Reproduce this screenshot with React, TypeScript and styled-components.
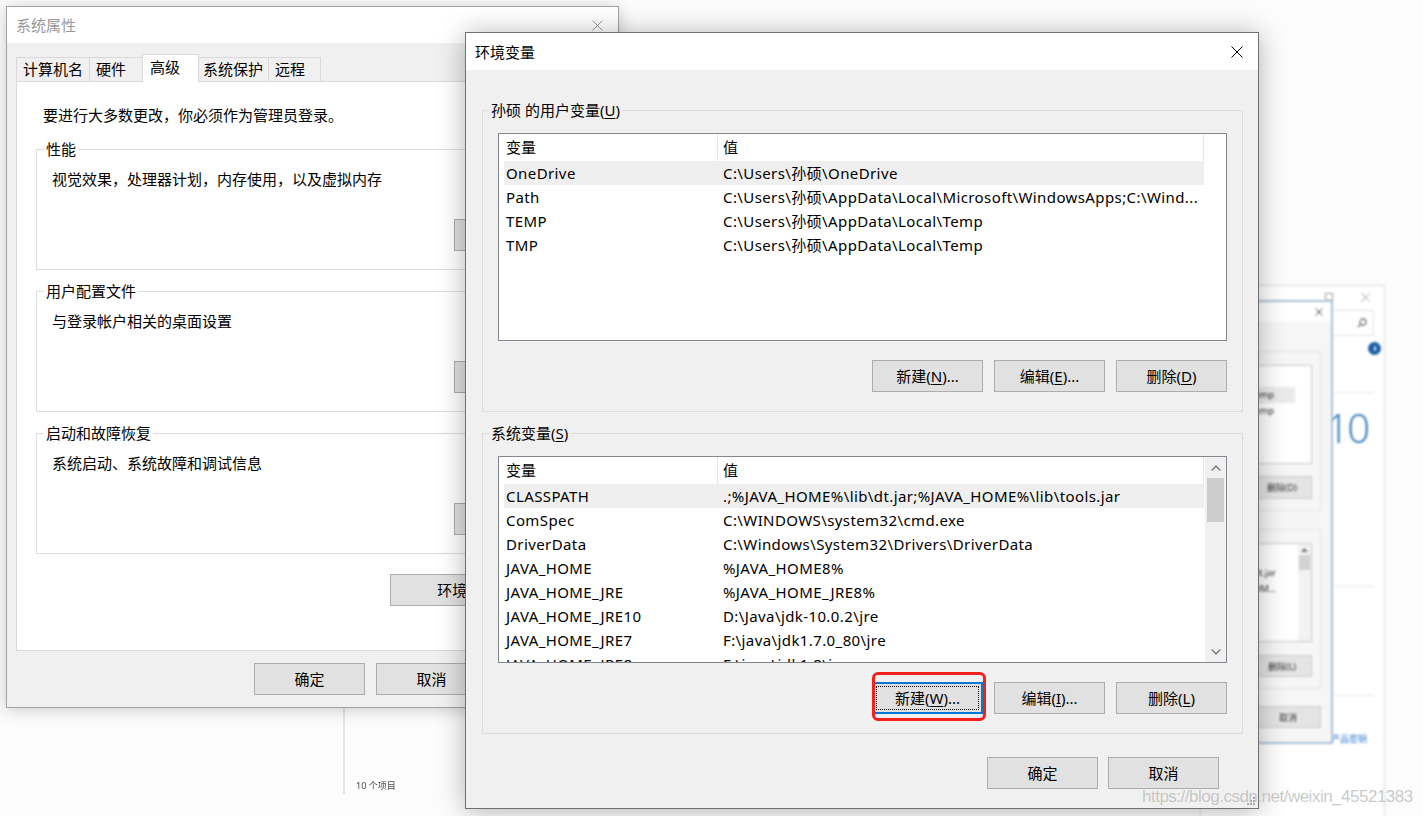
import React from "react";
import styled, { createGlobalStyle } from "styled-components";

const GlobalStyle = createGlobalStyle`
  html, body { margin: 0; padding: 0; }
  body {
    background: #fcfcfc;
    font-family: "Noto Sans", "Noto Sans CJK SC", sans-serif;
    font-size: 15px;
    color: #000;
    overflow: hidden;
  }
  *, *::before, *::after { box-sizing: border-box; }
`;

const Desktop = styled.div`
  position: relative;
  width: 1423px;
  height: 816px;
  overflow: hidden;
  background: #fcfcfc;
`;

type Frame = { $x: number; $y: number; $w: number; $h: number };

/* ---------- generic window chrome ---------- */

const Window = styled.section<Frame & { $active?: boolean }>`
  position: absolute;
  left: ${(p) => p.$x}px;
  top: ${(p) => p.$y}px;
  width: ${(p) => p.$w}px;
  height: ${(p) => p.$h}px;
  display: flex;
  flex-direction: column;
  background: #f0f0f0;
  border: 1px solid ${(p) => (p.$active ? "#707070" : "#a3a3a3")};
  box-shadow: ${(p) =>
    p.$active ? "0 2px 26px rgba(0,0,0,0.30)" : "0 2px 16px rgba(0,0,0,0.20)"};
`;

const TitleBar = styled.header<{ $h: number }>`
  flex: none;
  height: ${(p) => p.$h}px;
  background: #fff;
  display: flex;
  align-items: center;
  padding-left: 9px;
`;

const TitleText = styled.span<{ $inactive?: boolean }>`
  flex: 1;
  line-height: 20px;
  color: ${(p) => (p.$inactive ? "#999" : "#000")};
`;

const CloseBox = styled.span`
  width: 42px;
  height: 100%;
  display: flex;
  align-items: center;
  justify-content: center;
`;

const CloseIcon = ({ color, size }: { color: string; size: number }) => (
  <svg width={size} height={size} viewBox={`0 0 ${size} ${size}`}>
    <path
      d={`M0.5 0.5 L${size - 0.5} ${size - 0.5} M${size - 0.5} 0.5 L0.5 ${size - 0.5}`}
      stroke={color}
      strokeWidth="1"
      fill="none"
    />
  </svg>
);

const Key = styled.u`
  text-decoration-thickness: 1px;
  text-underline-offset: 2px;
`;

const Button = styled.button<{ $w?: number }>`
  flex: none;
  width: ${(p) => p.$w ?? 111}px;
  height: 32px;
  padding: 0;
  margin: 0;
  background: #e1e1e1;
  border: 1px solid #adadad;
  font: inherit;
  font-size: 15px;
  color: #000;
  line-height: 20px;
`;

const DefaultButton = styled(Button)`
  border: 2px solid #0078d7;
  outline: 1px dotted #000;
  outline-offset: -5px;
`;

const ButtonRow = styled.div<{ $mt: number; $gap: number; $pr?: number }>`
  display: flex;
  justify-content: flex-end;
  gap: ${(p) => p.$gap}px;
  margin-top: ${(p) => p.$mt}px;
  padding-right: ${(p) => p.$pr ?? 0}px;
`;

/* ---------- group boxes ---------- */

const GroupBox = styled.div<{ $mt: number; $bg: string; $pad: string }>`
  display: flex;
  flex-direction: column;
  margin-top: ${(p) => p.$mt}px;
  border: 1px solid #dcdcdc;
  padding: ${(p) => p.$pad};
  background: ${(p) => p.$bg};
`;

const Caption = styled.div<{ $bg: string; $ml: number }>`
  align-self: flex-start;
  margin: -11px 0 0 ${(p) => p.$ml}px;
  padding: 0 2px;
  line-height: 20px;
  background: ${(p) => p.$bg};
`;

/* ---------- system properties ---------- */

const SysBody = styled.div`
  flex: 1;
  display: flex;
  flex-direction: column;
  padding: 11px 9px 0;
`;

const TabStrip = styled.div`
  display: flex;
  align-items: flex-end;
  height: 27px;
  & > :first-child {
    border-left: 1px solid #d9d9d9;
  }
`;

const Tab = styled.div<{ $w: number; $selected?: boolean }>`
  flex: none;
  position: relative;
  z-index: ${(p) => (p.$selected ? 2 : 1)};
  width: ${(p) => p.$w}px;
  height: ${(p) => (p.$selected ? 28 : 24)}px;
  margin: ${(p) => (p.$selected ? "0 -2px -1px" : "0")};
  padding-left: ${(p) => (p.$selected ? 7 : 6)}px;
  line-height: ${(p) => (p.$selected ? 25 : 23)}px;
  white-space: nowrap;
  background: ${(p) => (p.$selected ? "#fff" : "#f0f0f0")};
  border-top: 1px solid #d9d9d9;
  border-right: 1px solid #d9d9d9;
  border-left: ${(p) => (p.$selected ? "1px solid #d9d9d9" : "none")};
`;

const TabPanel = styled.div`
  flex: none;
  height: 570px;
  display: flex;
  flex-direction: column;
  padding: 23px 19px 0;
  background: #fff;
  border: 1px solid #d9d9d9;
`;

const Notice = styled.p`
  margin: 0 0 0 7px;
  line-height: 20px;
`;

const GroupText = styled.p`
  margin: 10px 0 0;
  line-height: 20px;
`;

const GroupAction = styled(Button)`
  align-self: flex-end;
  margin-top: 30px;
`;

const WideAction = styled(Button)`
  align-self: flex-end;
  margin-top: 20px;
  margin-right: 12px;
`;

/* ---------- env var dialog ---------- */

const EnvBody = styled.div`
  flex: 1;
  display: flex;
  flex-direction: column;
  padding: 40px 15px 0 16px;
`;

const ListView = styled.div<{ $h: number }>`
  flex: none;
  height: ${(p) => p.$h}px;
  margin-top: 13px;
  display: flex;
  background: #fff;
  border: 1px solid #828790;
  overflow: hidden;
`;

const ListTable = styled.div`
  flex: 1;
  min-width: 0;
  display: flex;
  flex-direction: column;
`;

const HeaderRow = styled.div`
  flex: none;
  display: flex;
  height: 27px;
`;

const HeaderCell = styled.div<{ $w: number; $pl: number }>`
  flex: none;
  width: ${(p) => p.$w}px;
  padding-left: ${(p) => p.$pl}px;
  line-height: 27px;
  border-right: 1px solid #e5e5e5;
`;

const Row = styled.div<{ $selected?: boolean }>`
  flex: none;
  display: flex;
  width: 700px;
  height: 24px;
  margin-left: 5px;
  line-height: 24px;
  letter-spacing: 0.4px;
  white-space: nowrap;
  background: ${(p) => (p.$selected ? "#efefef" : "transparent")};
`;

const NameCell = styled.span`
  flex: none;
  width: 217px;
  padding-left: 2px;
`;

const ValueCell = styled.span`
  flex: 1;
  min-width: 0;
  padding-left: 2px;
  overflow: hidden;
`;

const ScrollBar = styled.div`
  flex: none;
  width: 21px;
  display: flex;
  flex-direction: column;
  background: #f0f0f0;
`;

const ScrollArrow = styled.div`
  flex: none;
  height: 21px;
  display: flex;
  align-items: center;
  justify-content: center;
`;

const ScrollThumb = styled.div`
  flex: none;
  height: 44px;
  margin: 0 2px;
  background: #cdcdcd;
`;

const ScrollTrack = styled.div`
  flex: 1;
`;

const Chevron = ({ up }: { up?: boolean }) => (
  <svg width="10" height="6" viewBox="0 0 10 6">
    <path
      d={up ? "M0.7 5.3 L5 1 L9.3 5.3" : "M0.7 0.7 L5 5 L9.3 0.7"}
      stroke="#606060"
      strokeWidth="1.2"
      fill="none"
    />
  </svg>
);

const HighlightWrap = styled.span`
  position: relative;
  display: inline-flex;
`;

const RedMark = styled.span`
  position: absolute;
  left: 0;
  top: -10px;
  width: 114px;
  height: 49px;
  border: 3px solid #f41f1f;
  border-radius: 6px;
  pointer-events: none;
`;

const Grip = styled.svg`
  position: absolute;
  right: 3px;
  bottom: 3px;
`;

/* ---------- blurred background windows ---------- */

const GhostWindow = styled.div<Frame & { $border: string; $bg: string }>`
  position: absolute;
  left: ${(p) => p.$x}px;
  top: ${(p) => p.$y}px;
  width: ${(p) => p.$w}px;
  height: ${(p) => p.$h}px;
  display: flex;
  flex-direction: column;
  background: ${(p) => p.$bg};
  border: ${(p) => p.$border};
  filter: blur(0.8px);
  font-size: 9px;
  color: #333;
`;

const GhostCaption = styled.div<{ $h: number; $bg: string; $pr: number }>`
  flex: none;
  height: ${(p) => p.$h}px;
  display: flex;
  justify-content: flex-end;
  align-items: center;
  padding-right: ${(p) => p.$pr}px;
  background: ${(p) => p.$bg};
`;

const CapBtn = styled.span<{ $w: number }>`
  width: ${(p) => p.$w}px;
  display: flex;
  justify-content: center;
  align-items: center;
`;

const MaxBox = styled.span`
  width: 8px;
  height: 8px;
  border: 1px solid #9a9a9a;
`;

const SettingsContent = styled.div`
  flex: 1;
  display: flex;
  flex-direction: column;
  align-items: flex-end;
  padding-right: 10px;
`;

const SearchBox = styled.div`
  width: 100px;
  height: 26px;
  margin-top: 2px;
  display: flex;
  align-items: center;
  justify-content: flex-end;
  padding-right: 6px;
  border: 1px solid #e2e2e2;
`;

const InfoDot = styled.div`
  margin-top: 6px;
  margin-right: -7px;
  width: 13px;
  height: 13px;
  border-radius: 50%;
  background: #1d5fa5;
  display: flex;
  align-items: center;
  justify-content: center;
  &::after {
    content: "";
    width: 2px;
    height: 5px;
    background: #cfe0f2;
    border-radius: 1px;
  }
`;

const GhostRule = styled.div<{ $mt: number }>`
  flex: none;
  width: 40px;
  height: 1px;
  margin-top: ${(p) => p.$mt}px;
  background: #e3e3e3;
`;

const BigTitle = styled.div`
  margin-top: 15px;
  margin-right: 6px;
  white-space: nowrap;
  font-family: "Open Sans", "Noto Sans", sans-serif;
  font-weight: 300;
  font-size: 40px;
  line-height: 40px;
  letter-spacing: -2px;
  color: #2b73b4;
`;

const GhostLink = styled.div`
  margin-top: 37px;
  margin-right: 7px;
  font-size: 9px;
  line-height: 12px;
  color: #3a7fd0;
`;

const InnerContent = styled.div`
  flex: 1;
  display: flex;
  flex-direction: column;
  padding-right: 10px;
`;

const GhostGroup = styled.div<{ $mt: number }>`
  display: flex;
  flex-direction: column;
  margin-top: ${(p) => p.$mt}px;
  padding: 0 8px 11px 10px;
  border: 1px solid #e1e1e1;
`;

const GhostList = styled.div`
  flex: none;
  height: 99px;
  margin-top: 13px;
  display: flex;
  background: #fff;
  border: 1px solid #c9c9c9;
`;

const GhostListBody = styled.div`
  flex: 1;
  display: flex;
  flex-direction: column;
  padding-top: 21px;
`;

const GhostRow = styled.div<{ $selected?: boolean; $pr: number }>`
  height: 16px;
  line-height: 16px;
  margin-right: 16px;
  padding-right: ${(p) => p.$pr}px;
  text-align: right;
  white-space: nowrap;
  background: ${(p) => (p.$selected ? "#ebebeb" : "transparent")};
`;

const GhostScroll = styled.div`
  flex: none;
  width: 13px;
  display: flex;
  flex-direction: column;
  align-items: center;
  background: #f3f3f3;
  padding-top: 4px;
  & > i {
    width: 11px;
    height: 15px;
    margin-top: 3px;
    background: #d2d2d2;
  }
`;

const GhostButton = styled.div<{ $w: number; $h: number; $mt: number }>`
  align-self: flex-end;
  width: ${(p) => p.$w}px;
  height: ${(p) => p.$h}px;
  margin-top: ${(p) => p.$mt}px;
  display: flex;
  align-items: center;
  justify-content: center;
  background: #e4e4e4;
  border: 1px solid #cbcbcb;
  font-size: 9px;
`;

const ExplorerGhost = styled.div`
  position: absolute;
  left: 343px;
  top: 690px;
  width: 200px;
  height: 104px;
  display: flex;
  flex-direction: column;
  justify-content: flex-end;
  padding: 0 0 2px 11px;
  border-left: 2px solid #e3e3e3;
  filter: blur(0.6px);
  font-size: 9px;
  line-height: 12px;
  color: #4a4a4a;
`;

const Watermark = styled.div`
  position: absolute;
  left: 1142px;
  top: 786px;
  font-family: "Liberation Sans", Arial, sans-serif;
  font-size: 17px;
  line-height: 22px;
  letter-spacing: -0.5px;
  color: rgba(110, 110, 110, 0.38);
  text-shadow: 0 0 1px rgba(255, 255, 255, 0.6);
  white-space: nowrap;
  pointer-events: none;
`;

/* ---------- data ---------- */

const tabs = [
  { label: "计算机名", w: 74 },
  { label: "硬件", w: 54 },
  { label: "高级", w: 57, selected: true },
  { label: "系统保护", w: 72 },
  { label: "远程", w: 52 },
];

const sysGroups = [
  { title: "性能", text: "视觉效果，处理器计划，内存使用，以及虚拟内存", mt: 24 },
  { title: "用户配置文件", text: "与登录帐户相关的桌面设置", mt: 21 },
  { title: "启动和故障恢复", text: "系统启动、系统故障和调试信息", mt: 21 },
];

const userVars: [string, string][] = [
  ["OneDrive", "C:\\Users\\孙硕\\OneDrive"],
  ["Path", "C:\\Users\\孙硕\\AppData\\Local\\Microsoft\\WindowsApps;C:\\Wind..."],
  ["TEMP", "C:\\Users\\孙硕\\AppData\\Local\\Temp"],
  ["TMP", "C:\\Users\\孙硕\\AppData\\Local\\Temp"],
];

const sysVars: [string, string][] = [
  ["CLASSPATH", ".;%JAVA_HOME%\\lib\\dt.jar;%JAVA_HOME%\\lib\\tools.jar"],
  ["ComSpec", "C:\\WINDOWS\\system32\\cmd.exe"],
  ["DriverData", "C:\\Windows\\System32\\Drivers\\DriverData"],
  ["JAVA_HOME", "%JAVA_HOME8%"],
  ["JAVA_HOME_JRE", "%JAVA_HOME_JRE8%"],
  ["JAVA_HOME_JRE10", "D:\\Java\\jdk-10.0.2\\jre"],
  ["JAVA_HOME_JRE7", "F:\\java\\jdk1.7.0_80\\jre"],
  ["JAVA_HOME_JRE8", "F:\\java\\jdk1.8\\jre"],
];

/* ---------- pieces ---------- */

const VarList = ({ rows, h, scroll }: { rows: [string, string][]; h: number; scroll?: boolean }) => (
  <ListView $h={h}>
    <ListTable>
      <HeaderRow>
        <HeaderCell $w={219} $pl={7}>变量</HeaderCell>
        <HeaderCell $w={486} $pl={5}>值</HeaderCell>
      </HeaderRow>
      {rows.map(([n, v], i) => (
        <Row key={n} $selected={i === 0}>
          <NameCell>{n}</NameCell>
          <ValueCell>{v}</ValueCell>
        </Row>
      ))}
    </ListTable>
    {scroll && (
      <ScrollBar>
        <ScrollArrow>
          <Chevron up />
        </ScrollArrow>
        <ScrollThumb />
        <ScrollTrack />
        <ScrollArrow>
          <Chevron />
        </ScrollArrow>
      </ScrollBar>
    )}
  </ListView>
);

const SystemProperties = () => (
  <Window $x={6} $y={6} $w={613} $h={702}>
    <TitleBar $h={36}>
      <TitleText $inactive>系统属性</TitleText>
      <CloseBox>
        <CloseIcon color="#9a9a9a" size={11} />
      </CloseBox>
    </TitleBar>
    <SysBody>
      <TabStrip>
        {tabs.map((t) => (
          <Tab key={t.label} $w={t.w} $selected={t.selected}>
            {t.label}
          </Tab>
        ))}
      </TabStrip>
      <TabPanel>
        <Notice>要进行大多数更改，你必须作为管理员登录。</Notice>
        {sysGroups.map((g) => (
          <GroupBox key={g.title} $mt={g.mt} $bg="#fff" $pad="0 23px 18px 15px">
            <Caption $bg="#fff" $ml={-8}>
              {g.title}
            </Caption>
            <GroupText>{g.text}</GroupText>
            <GroupAction>设置(<Key>S</Key>)...</GroupAction>
          </GroupBox>
        ))}
        <WideAction $w={187}>
          环境变量(<Key>N</Key>)...
        </WideAction>
      </TabPanel>
      <ButtonRow $mt={12} $gap={11}>
        <Button>确定</Button>
        <Button>取消</Button>
        <Button>应用(<Key>A</Key>)</Button>
      </ButtonRow>
    </SysBody>
  </Window>
);

const EnvironmentVariables = () => (
  <Window $x={465} $y={32} $w={794} $h={777} $active>
    <TitleBar $h={37}>
      <TitleText>环境变量</TitleText>
      <CloseBox>
        <CloseIcon color="#000" size={12} />
      </CloseBox>
    </TitleBar>
    <EnvBody>
      <GroupBox $mt={0} $bg="transparent" $pad="0 15px 19px">
        <Caption $bg="#f0f0f0" $ml={-9}>
          孙硕 的用户变量(<Key>U</Key>)
        </Caption>
        <VarList rows={userVars} h={208} />
        <ButtonRow $mt={19} $gap={11}>
          <Button>新建(<Key>N</Key>)...</Button>
          <Button>编辑(<Key>E</Key>)...</Button>
          <Button>删除(<Key>D</Key>)</Button>
        </ButtonRow>
      </GroupBox>
      <GroupBox $mt={21} $bg="transparent" $pad="0 15px 19px">
        <Caption $bg="#f0f0f0" $ml={-9}>
          系统变量(<Key>S</Key>)
        </Caption>
        <VarList rows={sysVars} h={207} scroll />
        <ButtonRow $mt={19} $gap={11}>
          <HighlightWrap>
            <DefaultButton>新建(<Key>W</Key>)...</DefaultButton>
            <RedMark />
          </HighlightWrap>
          <Button>编辑(<Key>I</Key>)...</Button>
          <Button>删除(<Key>L</Key>)</Button>
        </ButtonRow>
      </GroupBox>
      <ButtonRow $mt={23} $gap={10} $pr={24}>
        <Button>确定</Button>
        <Button>取消</Button>
      </ButtonRow>
    </EnvBody>
    <Grip width="10" height="10" viewBox="0 0 10 10">
      <g fill="#a8a8a8">
        <rect x="8" y="2" width="2" height="2" />
        <rect x="5" y="5" width="2" height="2" />
        <rect x="8" y="5" width="2" height="2" />
        <rect x="2" y="8" width="2" height="2" />
        <rect x="5" y="8" width="2" height="2" />
        <rect x="8" y="8" width="2" height="2" />
      </g>
    </Grip>
  </Window>
);

const SettingsGhost = () => (
  <GhostWindow $x={1200} $y={285} $w={185} $h={560} $border="1px solid #dadada" $bg="#fff">
    <GhostCaption $h={22} $bg="#fff" $pr={0}>
      <CapBtn $w={37}>
        <MaxBox />
      </CapBtn>
      <CapBtn $w={37}>
        <CloseIcon color="#9a9a9a" size={9} />
      </CapBtn>
    </GhostCaption>
    <SettingsContent>
      <SearchBox>
        <svg width="10" height="10" viewBox="0 0 10 10">
          <circle cx="6" cy="4" r="3" stroke="#777" strokeWidth="1.3" fill="none" />
          <path d="M4 6 L1 9" stroke="#777" strokeWidth="1.5" />
        </svg>
      </SearchBox>
      <InfoDot />
      <GhostRule $mt={37} />
      <BigTitle>Windows 10</BigTitle>
      <GhostRule $mt={138} />
      <GhostRule $mt={108} />
      <GhostLink>产品密钥</GhostLink>
    </SettingsContent>
  </GhostWindow>
);

const DialogGhost = () => (
  <GhostWindow $x={1060} $y={300} $w={273} $h={444} $border="2px solid #a9bfd9" $bg="#f6f6f6">
    <GhostCaption $h={20} $bg="#fff" $pr={2}>
      <CapBtn $w={20}>
        <CloseIcon color="#444" size={8} />
      </CapBtn>
    </GhostCaption>
    <InnerContent>
      <GhostGroup $mt={29}>
        <GhostList>
          <GhostListBody>
            <GhostRow $selected $pr={21}>C:\Users\AppData\Local\Temp</GhostRow>
            <GhostRow $pr={21}>C:\Users\AppData\Local\Temp</GhostRow>
          </GhostListBody>
        </GhostList>
        <GhostButton $w={60} $h={23} $mt={12}>删除(D)</GhostButton>
      </GhostGroup>
      <GhostGroup $mt={18}>
        <GhostList>
          <GhostListBody>
            <GhostRow $pr={6}>%JAVA_HOME%\lib\dt.jar</GhostRow>
            <GhostRow $pr={6}>%JAVA_HOM...</GhostRow>
          </GhostListBody>
          <GhostScroll>
            <svg width="7" height="4" viewBox="0 0 7 4">
              <path d="M0 4 L3.5 0 L7 4 Z" fill="#777" />
            </svg>
            <i />
          </GhostScroll>
        </GhostList>
        <GhostButton $w={60} $h={22} $mt={13}>删除(L)</GhostButton>
      </GhostGroup>
      <GhostButton $w={66} $h={22} $mt={17}>取消</GhostButton>
    </InnerContent>
  </GhostWindow>
);

export default function App() {
  return (
    <>
      <GlobalStyle />
      <Desktop>
        <ExplorerGhost>10 个项目</ExplorerGhost>
        <SettingsGhost />
        <DialogGhost />
        <SystemProperties />
        <EnvironmentVariables />
        <Watermark>https://blog.csdn.net/weixin_45521383</Watermark>
      </Desktop>
    </>
  );
}
